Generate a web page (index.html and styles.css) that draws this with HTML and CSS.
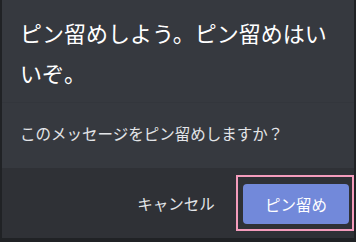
FILE: index.html
```html
<!DOCTYPE html>
<html lang="ja">
<head>
    <meta charset="UTF-8">
    <meta name="viewport" content="width=device-width, initial-scale=1.0">
    <title>ピン留め</title>
    <link rel="stylesheet" href="styles.css">
</head>
<body>
    <div class="modal">
        <div class="modal-header">
            <h2 class="modal-title">ピン留めしよう。ピン留めはいいぞ。</h2>
        </div>
        <div class="modal-body">
            <p>このメッセージをピン留めしますか？</p>
        </div>
        <div class="modal-footer">
            <button class="btn-cancel">キャンセル</button>
            <div class="highlight">
                <button class="btn-pin">ピン留め</button>
            </div>
        </div>
    </div>
</body>
</html>
```

FILE: styles.css
```css
* {
    box-sizing: border-box;
}
body {
    margin: 0;
    width: 356px;
    height: 242px;
    overflow: hidden;
    background-color: #202225;
    font-family: "Noto Sans CJK JP", "Noto Sans", sans-serif;
}
.modal {
    margin-left: 2px;
    width: 352px;
    height: 238px;
    background-color: #36393f;
    display: flex;
    flex-direction: column;
}
.modal-header {
    padding: 12px 18px 10px 18px;
    border-bottom: 1px solid #33363c;
}
.modal-title {
    margin: 0;
    color: #ffffff;
    font-size: 22px;
    font-weight: normal;
    line-height: 40px;
}
.modal-body {
    padding: 20px 18px 0 18px;
    height: 65px;
}
.modal-body p {
    margin: 0;
    color: #e3e5e8;
    font-size: 15.5px;
    line-height: 20px;
}
.modal-footer {
    flex: 1;
    background-color: #2f3136;
    display: flex;
    justify-content: flex-end;
    align-items: center;
}
button {
    font-family: inherit;
    font-size: 15.5px;
    border: none;
    cursor: pointer;
    color: #ffffff;
}
.btn-cancel {
    background: none;
    width: 96px;
    height: 40px;
    margin-right: 12px;
    color: #e3e5e8;
}
.highlight {
    border: 2px solid #f49cbc;
    padding: 7px 3px 5px 5px;
}
.btn-pin {
    display: block;
    width: 106px;
    height: 40px;
    background-color: #7289da;
    border-radius: 4px;
}
```
